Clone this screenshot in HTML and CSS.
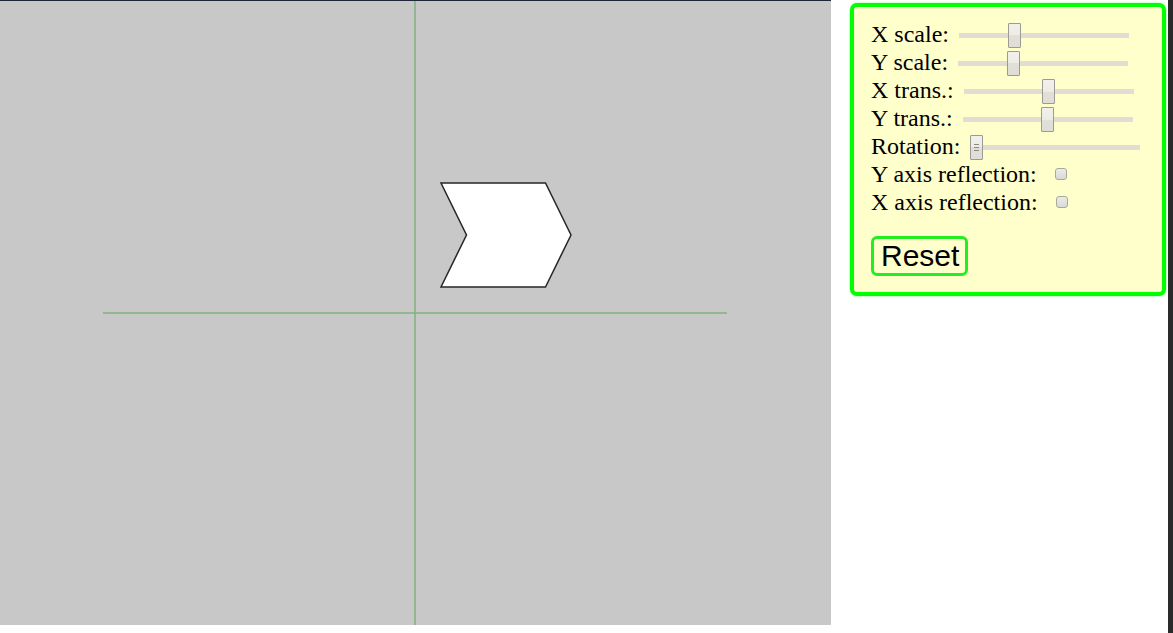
FILE: index.html
```html
<!DOCTYPE html>
<html>
<head>
<meta charset="utf-8">
<link rel="stylesheet" href="styles.css">
</head>
<body>
<div class="page">
  <div class="stage">
    <svg class="canvas" width="831" height="624" viewBox="0 0 831 624">
      <line x1="415" y1="0" x2="415" y2="624" class="axis"/>
      <line x1="103" y1="312" x2="727" y2="312" class="axis"/>
      <polygon class="shape" points="441,182 545.5,182 571,234 545.5,286 441,286 466.5,234"/>
    </svg>
  </div>
  <div class="panel">
    <div class="row"><label>X scale:</label> <input type="range" class="slider" min="0" max="100" value="31"></div>
    <div class="row"><label>Y scale:</label> <input type="range" class="slider" min="0" max="100" value="31"></div>
    <div class="row"><label>X trans.:</label> <input type="range" class="slider" min="0" max="100" value="50"></div>
    <div class="row"><label>Y trans.:</label> <input type="range" class="slider" min="0" max="100" value="50"></div>
    <div class="row"><label>Rotation:</label> <input type="range" class="slider grip" min="0" max="100" value="0"></div>
    <div class="row"><label>Y axis reflection:</label> <input type="checkbox" class="check"></div>
    <div class="row"><label>X axis reflection:</label> <input type="checkbox" class="check"></div>
    <button class="reset">Reset</button>
  </div>
  <div class="fill"></div>
  <div class="edge"></div>
</div>
</body>
</html>
```
FILE: styles.css
```css
html, body {
  margin: 0;
  padding: 0;
  background: #ffffff;
}
.page {
  display: flex;
  align-items: flex-start;
  height: 633px;
  overflow: hidden;
}
.stage {
  width: 831px;
  border-top: 1px solid #1f2638;
  flex: none;
}
.canvas {
  display: block;
  background: #c8c8c8;
}
.axis {
  stroke: #80b380;
  stroke-width: 1.5;
}
.shape {
  fill: #ffffff;
  stroke: #262626;
  stroke-width: 1.5;
}
.panel {
  flex: none;
  margin: 3px 0 0 19px;
  width: 316px;
  box-sizing: border-box;
  background: #ffffcc;
  border: 4px solid #00ff00;
  border-radius: 7px;
  box-shadow: 0 0 2px #5f5;
  padding: 13px 16px 16px 17px;
  font-family: "Liberation Serif", "Times New Roman", serif;
  font-size: 24px;
  color: #000;
}
.row {
  line-height: 28px;
  height: 28px;
  white-space: nowrap;
}
.slider {
  -webkit-appearance: none;
  appearance: none;
  width: 170px;
  height: 25px;
  margin: 0 0 0 4px;
  padding: 0;
  background: transparent;
  vertical-align: -6px;
}
.slider::-webkit-slider-runnable-track {
  height: 5px;
  background: #e1ddd4;
}
.slider::-webkit-slider-thumb {
  -webkit-appearance: none;
  appearance: none;
  box-sizing: border-box;
  width: 13px;
  height: 25px;
  margin-top: -10px;
  border: 1px solid #9c9a92;
  border-radius: 1px;
  background: linear-gradient(#f1f0ec 0, #edebe6 50%, #e2dfd8 50%, #e0ddd6 100%);
}
.grip::-webkit-slider-thumb {
  background:
    linear-gradient(#8a8a85, #8a8a85) center 8px / 5px 1px no-repeat,
    linear-gradient(#8a8a85, #8a8a85) center 11px / 5px 1px no-repeat,
    linear-gradient(#8a8a85, #8a8a85) center 14px / 5px 1px no-repeat,
    linear-gradient(#f1f0ec 0, #edebe6 50%, #e2dfd8 50%, #e0ddd6 100%);
}
.check {
  -webkit-appearance: none;
  appearance: none;
  box-sizing: border-box;
  width: 12px;
  height: 12px;
  margin: 0 0 0 12px;
  border: 1px solid #a9a8a0;
  border-radius: 3px;
  background: linear-gradient(#ebebe8, #d9d9d5);
  vertical-align: 2px;
}
.reset {
  margin-top: 20px;
  display: block;
  font-family: "Liberation Sans", Arial, sans-serif;
  font-size: 30px;
  line-height: 34px;
  height: 40px;
  padding: 0 6px 0 7px;
  background: #ffffcc;
  border: 3px solid #22ee22;
  border-radius: 6px;
  color: #000;
}
.fill {
  flex: 1;
}
.edge {
  flex: none;
  width: 5px;
  height: 633px;
  background: #2a2a2a;
}
```
